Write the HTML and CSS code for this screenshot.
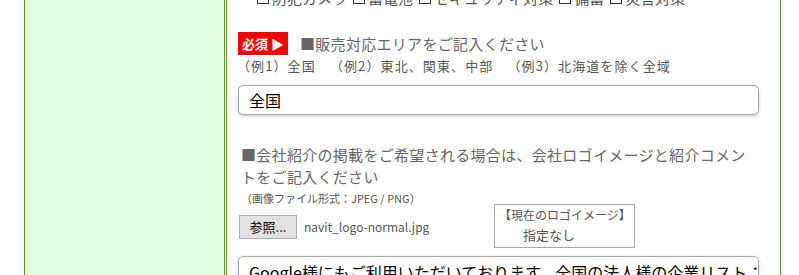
FILE: index.html
```html
<html>
  <head>
    <meta charset="utf-8">
    <title>掲載情報の登録</title>
    <link rel="stylesheet" href="styles.css">
  </head>
  <body>
    <div class="page">
      <div class="sidebar"></div>
      <div class="main">
        <div class="check-row">
          <label class="check"><span class="box"></span>防犯カメラ</label>
          <label class="check"><span class="box"></span>蓄電池</label>
          <label class="check"><span class="box"></span>セキュリティ対策</label>
          <label class="check"><span class="box"></span>備蓄</label>
          <label class="check"><span class="box"></span>災害対策</label>
        </div>

        <div class="field area-field">
          <div class="field-title">
            <span class="required">必須 ▶</span>
            <span class="title-text">■販売対応エリアをご記入ください</span>
          </div>
          <div class="note">（例1）全国　（例2）東北、関東、中部　（例3）北海道を除く全域</div>
          <div class="text-input">全国</div>
        </div>

        <div class="field logo-field">
          <div class="title-text block">■会社紹介の掲載をご希望される場合は、会社ロゴイメージと紹介コメントをご記入ください</div>
          <div class="small-note">（画像ファイル形式：JPEG / PNG）</div>
          <div class="file-row">
            <span class="file-button">参照...</span>
            <span class="file-name">navit_logo-normal.jpg</span>
            <div class="logo-box">
              <div class="logo-label">【現在のロゴイメージ】</div>
              <div class="logo-none">指定なし</div>
            </div>
          </div>
          <div class="text-area">Google様にもご利用いただいております。全国の法人様の企業リスト：</div>
        </div>
      </div>
    </div>
  </body>
</html>
```

FILE: styles.css
```css
body {
  margin: 0;
  padding: 0;
  background: #fff;
  font-family: "Noto Sans CJK JP", "Noto Sans", sans-serif;
  color: #555;
  overflow: hidden;
  text-spacing-trim: space-all;
}
.page {
  display: flex;
  align-items: stretch;
  height: 275px;
  padding-left: 24px;
}
.sidebar {
  width: 199px;
  background: #e3fde0;
  border-left: 1px solid #5b9b1e;
  border-right: 1px solid #5b9b1e;
}
.main {
  width: 543px;
  margin-left: 1px;
  border-left: 1px solid #5b9b1e;
  border-right: 1px solid #5b9b1e;
  padding: 0 0 0 10px;
  overflow: hidden;
}
.check-row {
  display: flex;
  gap: 6px;
  margin-top: -13px;
  padding-left: 20px;
  font-size: 15px;
  line-height: 22px;
  color: #555;
  white-space: nowrap;
}
.check {
  display: flex;
  align-items: center;
}
.box {
  display: inline-block;
  width: 10px;
  height: 10px;
  border: 1px solid #333;
  margin-right: 3px;
}
.field {
  width: 522px;
}
.area-field {
  margin-top: 23px;
}
.field-title {
  display: flex;
  align-items: center;
  height: 23px;
  padding-left: 1px;
}
.required {
  display: inline-block;
  width: 50px;
  height: 23px;
  line-height: 23px;
  background: #ff0000;
  color: #fff;
  font-weight: bold;
  font-size: 13px;
  text-align: center;
  margin-right: 12px;
}
.title-text {
  font-size: 15px;
  line-height: 22px;
  letter-spacing: 0.3px;
  color: #666;
}
.title-text.block {
  display: block;
  padding: 0 6px 0 4px;
}
.note {
  font-size: 13px;
  line-height: 22px;
  letter-spacing: 1.1px;
  color: #555;
}
.text-input {
  margin: 8px 0 0 1px;
  height: 30px;
  box-sizing: border-box;
  border: 1px solid #aaa;
  border-radius: 5px;
  box-shadow: 0 1px 3px rgba(0, 0, 0, 0.25);
  padding-left: 10px;
  font-size: 16px;
  line-height: 28px;
  color: #000;
}
.logo-field {
  margin-top: 29px;
}
.small-note {
  font-size: 11px;
  line-height: 18px;
  padding-left: 4px;
  margin: 1px 0 -3px;
  color: #555;
}
.file-row {
  display: flex;
  align-items: flex-start;
  padding-left: 2px;
}
.file-button {
  margin-top: 11px;
  width: 58px;
  height: 24px;
  box-sizing: border-box;
  border: 1px solid #adadad;
  background: #e1e1e1;
  color: #000;
  font-size: 13px;
  line-height: 22px;
  text-align: center;
}
.file-name {
  margin: 12px 0 0 7px;
  width: 190px;
  font-size: 12px;
  line-height: 22px;
  color: #555;
}
.logo-box {
  width: 141px;
  height: 44px;
  border: 1px solid #aaa;
  box-sizing: border-box;
  color: #555;
  line-height: 20px;
}
.logo-label {
  font-size: 12px;
  padding-left: 4px;
}
.logo-none {
  padding-left: 28px;
  font-size: 13px;
}
.text-area {
  margin: 8px 0 0 1px;
  height: 40px;
  box-sizing: border-box;
  border: 1px solid #aaa;
  border-radius: 5px;
  box-shadow: 0 1px 3px rgba(0, 0, 0, 0.25);
  padding: 3px 10px;
  font-size: 16px;
  line-height: 24px;
  color: #000;
  white-space: nowrap;
  overflow: hidden;
}
```
